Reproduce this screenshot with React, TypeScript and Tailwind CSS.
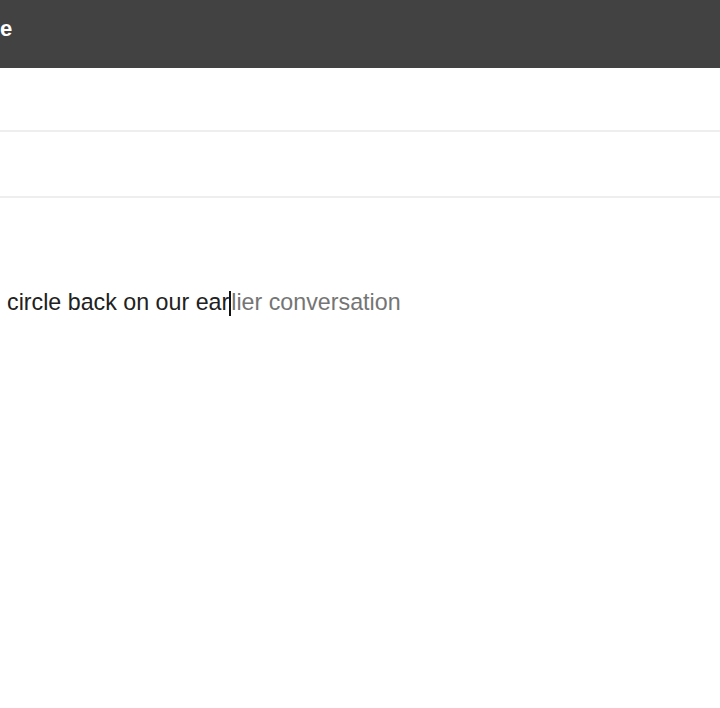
export default function App() {
  return (
    <div className="w-[720px] h-[708px] bg-white overflow-hidden" style={{ fontFamily: '"Liberation Sans", Arial, sans-serif' }}>
      <div className="h-[68px] bg-[#424242] flex items-start pt-[15px]">
        <span className="text-[22px] leading-[28px] font-bold text-white">e</span>
      </div>
      <div className="h-[64px] border-b-2 border-[#eeeeee]" />
      <div className="h-[66px] border-b-2 border-[#eeeeee]" />
      <div className="pt-[90px] pl-[7px] text-[23.25px] leading-[28px] whitespace-nowrap">
        <span className="text-[#212121]">circle back on our ear</span>
        <span className="inline-block w-[2px] h-[25px] bg-[#111111] align-[-6px]" />
        <span className="text-[#757575]">lier conversation</span>
      </div>
    </div>
  );
}
